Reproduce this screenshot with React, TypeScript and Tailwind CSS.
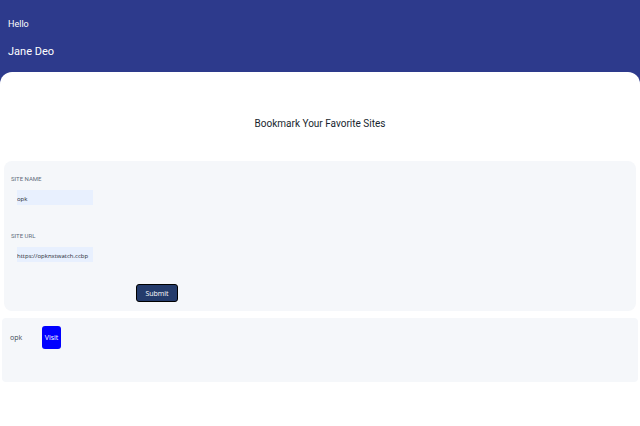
import { useState } from 'react'

type FieldProps = {
  id: string
  label: string
  type: string
  value: string
  onChange: (value: string) => void
}

function Field({ id, label, type, value, onChange }: FieldProps) {
  return (
    <div className="flex flex-col items-start">
      <label htmlFor={id} className="text-[6px] leading-2 text-[#5f6c7a] uppercase">
        {label}
      </label>
      <input
        id={id}
        type={type}
        value={value}
        onChange={(event) => onChange(event.target.value)}
        className="mt-[7px] ml-1.5 h-[15px] w-[76px] bg-[#e8f0fe] pt-0.5 font-['Open_Sans',sans-serif] text-[6px] text-[#1f2933] outline-none"
      />
    </div>
  )
}

export default function App() {
  const [name, setName] = useState('opk')
  const [url, setUrl] = useState('https://opknxtwatch.ccbp')

  return (
    <div className="min-h-screen bg-white font-['Roboto',sans-serif]">
      <header className="bg-[#2d3a8c]">
        <div className="px-2 pt-4 pb-2.5 text-white">
          <p className="text-[9px] leading-4">Hello</p>
          <p className="mt-2.5 text-[11px] leading-5">Jane Deo</p>
        </div>
        <div className="h-4 rounded-t-xl bg-white" />
      </header>

      <main className="pt-6">
        <h1 className="text-center text-[10px] leading-6 text-[#171f2e]">Bookmark Your Favorite Sites</h1>

        <form
          onSubmit={(event) => event.preventDefault()}
          className="mx-1 mt-[25px] rounded-lg bg-[#f5f7fa] px-[7px] pt-[14px] pb-[9px]"
        >
          <div className="flex flex-col gap-[27px]">
            <Field id="site-name" label="Site name" type="text" value={name} onChange={setName} />
            <Field id="site-url" label="Site url" type="url" value={url} onChange={setUrl} />
          </div>
          <button
            type="submit"
            className="mt-[22px] ml-[125px] block h-[18px] w-[42px] rounded-[3px] border border-black bg-[#243b6b] pt-0.5 font-['Open_Sans',sans-serif] text-[7px] text-white"
          >
            Submit
          </button>
        </form>

        <ul className="mx-0.5 mt-[7px] min-h-16 rounded-sm bg-[#f5f7fa] px-2 pt-2">
          <li className="flex items-center gap-5 font-['Open_Sans',sans-serif]">
            <span className="w-3 pt-0.5 text-[7px] text-[#3e4c59]">opk</span>
            <a
              href="https://opknxtwatch.ccbp"
              className="flex h-[23px] w-[19px] items-center justify-center rounded-[3px] bg-[#0000ff] pt-0.5 text-[7px] text-white"
            >
              Visit
            </a>
          </li>
        </ul>
      </main>
    </div>
  )
}
